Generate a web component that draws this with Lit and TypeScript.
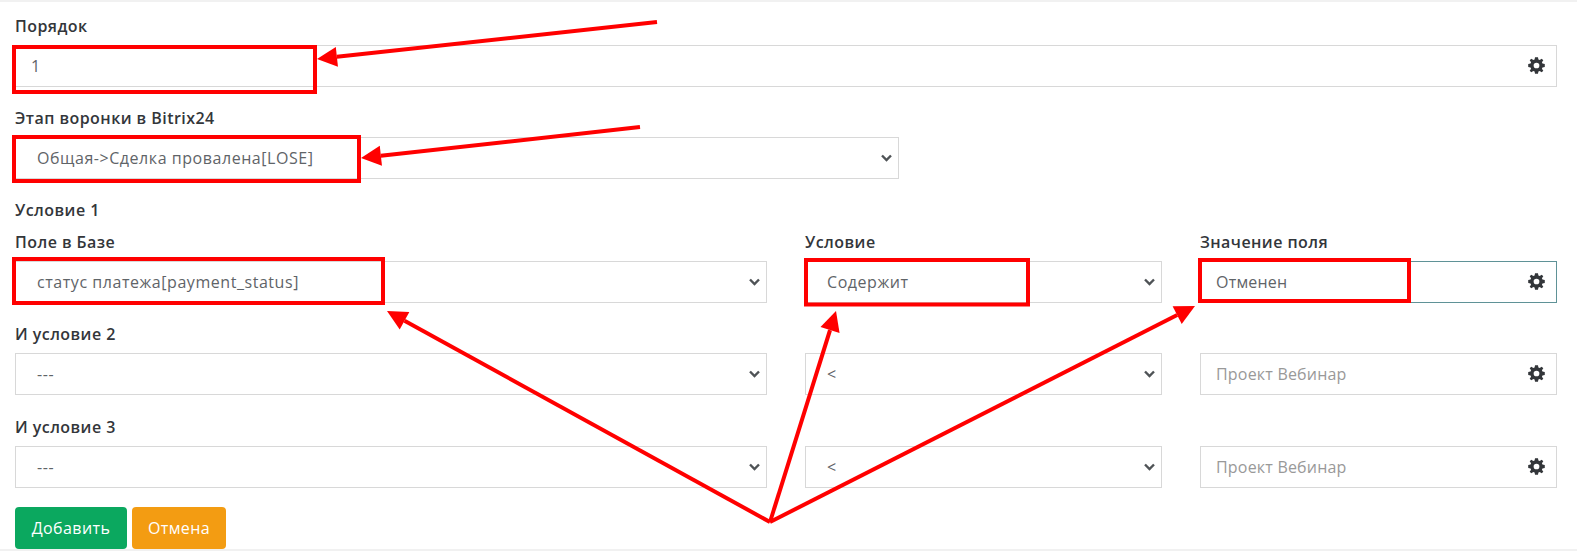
import { LitElement, html, css, svg } from 'lit';
import { customElement, property } from 'lit/decorators.js';

const GEAR = svg`<path d="M6.6 0.2H9.4L9.8 2.4 11 2.9 12.9 1.6 14.4 3.1 13.1 5 13.6 6.2 15.8 6.6V9.4L13.6 9.8 13.1 11 14.4 12.9 12.9 14.4 11 13.1 9.8 13.6 9.4 15.8H6.6L6.2 13.6 5 13.1 3.1 14.4 1.6 12.9 2.9 11 2.4 9.8 0.2 9.4V6.6L2.4 6.2 2.9 5 1.6 3.1 3.1 1.6 5 2.9 6.2 2.4ZM8 5.3A2.7 2.7 0 1 0 8 10.7 2.7 2.7 0 1 0 8 5.3Z" fill-rule="evenodd"/>`;

@customElement('form-input')
export class FormInput extends LitElement {
  @property({ type: String }) value = '';
  @property({ type: String }) placeholder = '';
  @property({ type: Boolean }) focused = false;

  static styles = css`
    :host { display: block; }
    .box {
      display: flex;
      align-items: center;
      height: 42px;
      box-sizing: border-box;
      border: 1px solid #d8d8d8;
      background: #fff;
      padding: 0 11px 0 15px;
      font-size: 16px;
      letter-spacing: 0.2px;
      color: #5f6468;
    }
    .box.focused { border-color: #5f9297; }
    .text { flex: 1; }
    .placeholder { color: #999; }
    svg { width: 17px; height: 17px; fill: #33363a; margin-top: -2px; }
  `;

  render() {
    return html`<div class="box ${this.focused ? 'focused' : ''}">
      <span class="text ${this.value ? '' : 'placeholder'}">${this.value || this.placeholder}</span>
      <svg viewBox="0 0 16 16">${GEAR}</svg>
    </div>`;
  }
}

@customElement('form-select')
export class FormSelect extends LitElement {
  @property({ type: String }) value = '';

  static styles = css`
    :host { display: block; }
    .box {
      display: flex;
      align-items: center;
      height: 42px;
      box-sizing: border-box;
      border: 1px solid #d8d8d8;
      background: #fff;
      padding: 0 6px 0 21px;
      font-size: 16px;
      letter-spacing: 0.55px;
      color: #5f6468;
    }
    .text { flex: 1; }
    svg { width: 11px; height: 8px; fill: none; stroke: #4f5356; stroke-width: 2.4; }
  `;

  render() {
    return html`<div class="box">
      <span class="text">${this.value}</span>
      <svg viewBox="0 0 11 8"><path d="M1 1.5 5.5 6 10 1.5"/></svg>
    </div>`;
  }
}

@customElement('app-root')
export class AppRoot extends LitElement {
  static styles = css`
    :host {
      display: block;
      position: relative;
      height: 560px;
      overflow: hidden;
      background: #fff;
      font-family: "Open Sans", "Noto Sans", sans-serif;
    }
    .form {
      display: flex;
      flex-direction: column;
      padding: 14px 20px 0 15px;
      border-top: 2px solid #f1f1f1;
      border-bottom: 2px solid #f1f1f1;
      height: 551px;
      box-sizing: border-box;
    }
    label, .title {
      display: block;
      font-size: 16px;
      font-weight: 600;
      letter-spacing: 0.45px;
      line-height: 21px;
      color: #33363a;
      margin-bottom: 8px;
    }
    .group { margin-bottom: 21px; }
    .narrow { width: 884px; }
    .title { margin: 0 0 11px; }
    .row {
      display: grid;
      grid-template-columns: 752fr 357fr 357fr;
      column-gap: 38px;
      margin-bottom: 21px;
    }
    .row.last { margin-top: 1px; margin-bottom: 19px; }
    .actions { display: flex; gap: 5px; }
    button {
      height: 42px;
      border: 1px solid transparent;
      border-radius: 4px;
      padding: 0;
      font: inherit;
      font-size: 16px;
      letter-spacing: 0.4px;
      color: #fff;
    }
    .ok { background: #0ba85f; width: 112px; }
    .cancel { background: #f39c12; width: 94px; }
    .marks {
      position: absolute;
      inset: 0;
      width: 100%;
      height: 100%;
      pointer-events: none;
    }
  `;

  private arrow(x1: number, y1: number, x2: number, y2: number, len = 20, half = 10) {
    // line ends at the base of the head, head tip lands on x2,y2
    const d = Math.hypot(x2 - x1, y2 - y1);
    const ux = (x2 - x1) / d;
    const uy = (y2 - y1) / d;
    const bx = x2 - ux * len;
    const by = y2 - uy * len;
    const pts = `${x2},${y2} ${bx - uy * half},${by + ux * half} ${bx + uy * half},${by - ux * half}`;
    return svg`<line x1=${x1} y1=${y1} x2=${bx} y2=${by} stroke="#f00" stroke-width="4"/>
      <polygon points=${pts} fill="#f00"/>`;
  }

  render() {
    return html`
      <div class="form">
        <div class="group">
          <label>Порядок</label>
          <form-input value="1"></form-input>
        </div>
        <div class="group narrow">
          <label>Этап воронки в Bitrix24</label>
          <form-select value="Общая->Сделка провалена[LOSE]"></form-select>
        </div>
        <div class="title">Условие 1</div>
        <div class="row">
          <div><label>Поле в Базе</label><form-select value="статус платежа[payment_status]"></form-select></div>
          <div><label>Условие</label><form-select value="Содержит"></form-select></div>
          <div><label>Значение поля</label><form-input focused value="Отменен"></form-input></div>
        </div>
        <div class="row">
          <div><label>И условие 2</label><form-select value="---"></form-select></div>
          <div><label>&nbsp;</label><form-select value="<"></form-select></div>
          <div><label>&nbsp;</label><form-input placeholder="Проект Вебинар"></form-input></div>
        </div>
        <div class="row last">
          <div><label>И условие 3</label><form-select value="---"></form-select></div>
          <div><label>&nbsp;</label><form-select value="<"></form-select></div>
          <div><label>&nbsp;</label><form-input placeholder="Проект Вебинар"></form-input></div>
        </div>
        <div class="actions">
          <button class="ok">Добавить</button>
          <button class="cancel">Отмена</button>
        </div>
      </div>
      <svg class="marks" viewBox="0 0 1577 560">
        <g fill="none" stroke="#f00" stroke-width="4">
          <rect x="14" y="47" width="301" height="45"/>
          <rect x="14" y="137" width="345" height="44"/>
          <rect x="14" y="259" width="369" height="44"/>
          <rect x="806" y="260" width="222" height="44.5"/>
          <rect x="1200" y="260" width="209" height="41"/>
        </g>
        ${this.arrow(657, 22, 317, 59)}
        ${this.arrow(640, 127, 361, 158)}
        ${this.arrow(770, 522, 387, 311)}
        ${this.arrow(770, 522, 836, 311)}
        ${this.arrow(770, 522, 1195, 306)}
      </svg>
    `;
  }
}
